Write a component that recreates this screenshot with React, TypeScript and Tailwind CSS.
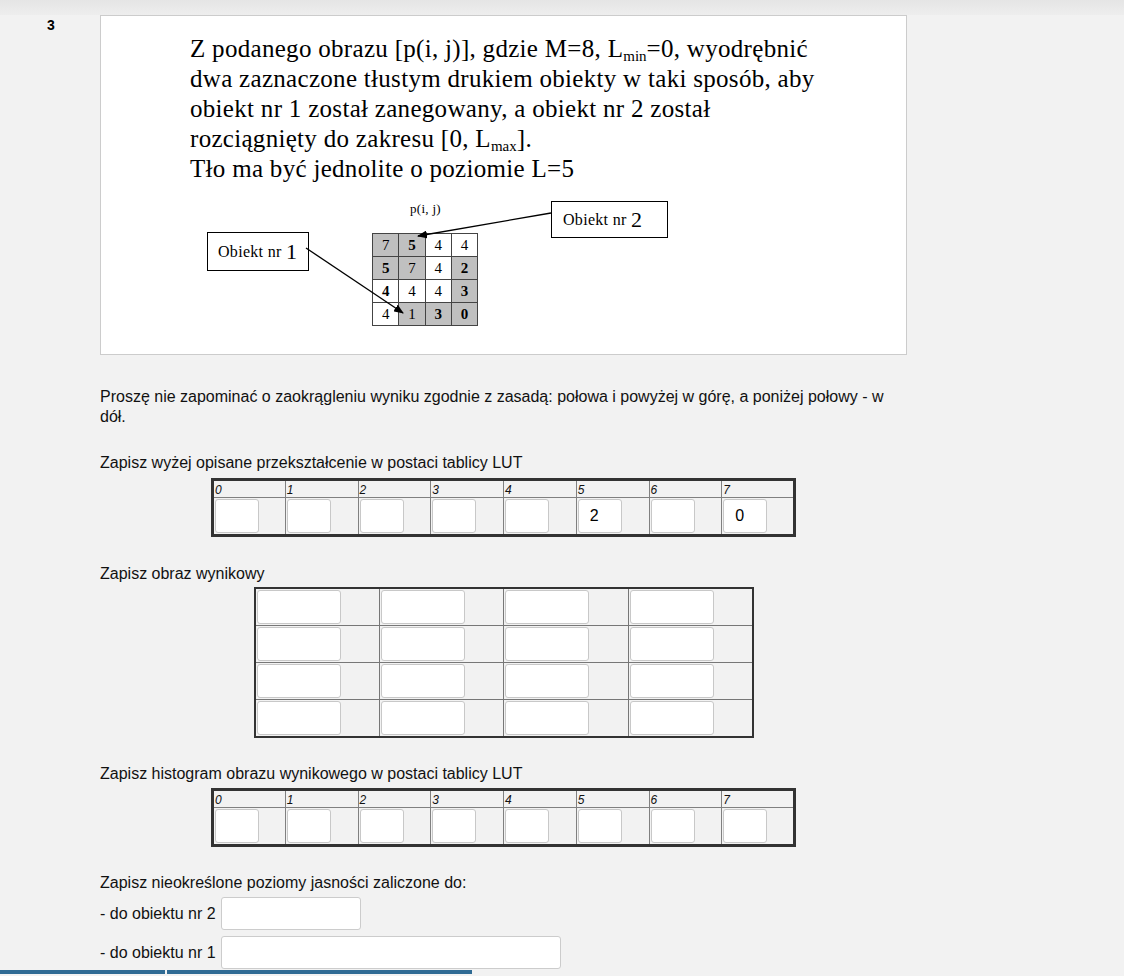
import React from 'react';

type Cell = { v: string; gray: boolean; bold: boolean };

const pixels: Cell[][] = [
  [{ v: '7', gray: true, bold: false }, { v: '5', gray: true, bold: true }, { v: '4', gray: false, bold: false }, { v: '4', gray: false, bold: false }],
  [{ v: '5', gray: true, bold: true }, { v: '7', gray: true, bold: false }, { v: '4', gray: false, bold: false }, { v: '2', gray: true, bold: true }],
  [{ v: '4', gray: false, bold: true }, { v: '4', gray: false, bold: false }, { v: '4', gray: false, bold: false }, { v: '3', gray: true, bold: true }],
  [{ v: '4', gray: false, bold: false }, { v: '1', gray: true, bold: false }, { v: '3', gray: true, bold: true }, { v: '0', gray: true, bold: true }],
];

function Diagram() {
  return (
    <div className="relative ml-[99px] mt-[12px] h-[140px] w-[480px] font-['Liberation_Serif',serif] text-black">
      <div className="absolute left-[210px] top-[5px] text-[13px] leading-[15px] tracking-[0.3px]">p(i, j)</div>

      <div className="absolute left-[7px] top-[36px] flex h-[39px] w-[102px] items-center border border-black pl-[10px] text-[16px] tracking-[0.3px]">
        Obiekt nr&nbsp;<span className="text-[22px] leading-none">1</span>
      </div>
      <div className="absolute left-[351px] top-[5px] flex h-[37px] w-[117px] items-center border border-black pl-[11px] text-[16px] tracking-[0.3px]">
        Obiekt nr&nbsp;<span className="text-[22px] leading-none">2</span>
      </div>

      <table className="absolute left-[172px] top-[37px] w-[106px] table-fixed border-collapse border border-black">
        <tbody>
          {pixels.map((row, r) => (
            <tr key={r}>
              {row.map((c, i) => (
                <td
                  key={i}
                  className={`h-[23px] border border-[#444] p-0 text-center text-[15px] leading-[15px] ${c.gray ? 'bg-[#c0c0c0]' : 'bg-white'} ${c.bold ? 'font-bold' : ''}`}
                >
                  {c.v}
                </td>
              ))}
            </tr>
          ))}
        </tbody>
      </table>

      <svg className="pointer-events-none absolute left-0 top-0" width="480" height="140" viewBox="0 0 480 140">
        <defs>
          <marker id="head" markerWidth="10" markerHeight="8" refX="9" refY="4" orient="auto" markerUnits="userSpaceOnUse">
            <path d="M0,0 L10,4 L0,8 Z" fill="#000" />
          </marker>
        </defs>
        <line x1="106" y1="52" x2="203" y2="117" stroke="#000" strokeWidth="1.3" markerEnd="url(#head)" />
        <line x1="351" y1="17" x2="218" y2="40" stroke="#000" strokeWidth="1.3" markerEnd="url(#head)" />
      </svg>
    </div>
  );
}

function LutTable({ values }: { values: Record<number, string> }) {
  const cols = [0, 1, 2, 3, 4, 5, 6, 7];
  return (
    <table className="mx-auto w-[585px] table-fixed border-collapse border-[3px] border-[#333]">
      <tbody>
        <tr>
          {cols.map((i) => (
            <td key={i} className="h-[18px] border border-[#808080] p-0 pl-px align-bottom text-[12px] italic leading-[13px]">
              {i}
            </td>
          ))}
        </tr>
        <tr>
          {cols.map((i) => (
            <td key={i} className="h-[38px] border border-[#808080] p-px">
              <input
                className="block h-[34px] w-[44px] rounded-[3px] border border-[#c8c8c8] bg-white px-[11px] text-[16px] text-black outline-none"
                defaultValue={values[i] ?? ''}
              />
            </td>
          ))}
        </tr>
      </tbody>
    </table>
  );
}

function ImageTable() {
  const rows = [0, 1, 2, 3];
  return (
    <table className="mx-auto w-[500px] table-fixed border-collapse border-2 border-[#333]">
      <tbody>
        {rows.map((r) => (
          <tr key={r}>
            {rows.map((c) => (
              <td key={c} className="h-[37px] border border-[#777] p-px">
                <input className="block h-[34px] w-[84px] rounded-[3px] border border-[#c8c8c8] bg-white outline-none" />
              </td>
            ))}
          </tr>
        ))}
      </tbody>
    </table>
  );
}

export default function App() {
  return (
    <div className="min-h-screen bg-[#f2f2f2] font-['Liberation_Sans',Arial,sans-serif] text-[#111]">
      <div className="h-[15px] bg-gradient-to-b from-[#e5e5e5] to-[#eeeeee]" />
      <div className="flex">
        <div className="w-[100px] shrink-0 pl-[47px] pt-[2px] text-[14px] font-bold leading-[16px] text-black">3</div>

        <div className="w-[807px] shrink-0">
          <div className="border border-[#cccccc] bg-white pb-[18px] pt-[18px]">
            <div className="pl-[89px] font-['Liberation_Serif',serif] text-[25px] leading-[30px] tracking-[0.3px] text-black">
              <div>
                Z podanego obrazu [p(i, j)], gdzie M=8, L<sub className="text-[15px] tracking-normal">min</sub>=0, wyodrębnić
              </div>
              <div>dwa zaznaczone tłustym drukiem obiekty w taki sposób, aby</div>
              <div>obiekt nr 1 został zanegowany, a obiekt nr 2 został</div>
              <div>
                rozciągnięty do zakresu [0, L<sub className="text-[15px] tracking-normal">max</sub>].
              </div>
              <div>Tło ma być jednolite o poziomie L=5</div>
            </div>
            <Diagram />
          </div>

          <p className="mt-[32px] text-[16px] leading-[20px]">
            Proszę nie zapominać o zaokrągleniu wyniku zgodnie z zasadą: połowa i powyżej w górę, a poniżej połowy - w dół.
          </p>

          <p className="mt-[26px] text-[16px] leading-[20px]">Zapisz wyżej opisane przekształcenie w postaci tablicy LUT</p>
          <div className="mt-[5px]">
            <LutTable values={{ 5: '2', 7: '0' }} />
          </div>

          <p className="mt-[27px] text-[16px] leading-[20px]">Zapisz obraz wynikowy</p>
          <div className="mt-[3px]">
            <ImageTable />
          </div>

          <p className="mt-[26px] text-[16px] leading-[20px]">Zapisz histogram obrazu wynikowego w postaci tablicy LUT</p>
          <div className="mt-[4px]">
            <LutTable values={{}} />
          </div>

          <p className="mt-[26px] text-[16px] leading-[20px]">Zapisz nieokreślone poziomy jasności zaliczone do:</p>
          <div className="mt-[4px] flex items-center gap-[5px] text-[16px]">
            <span>- do obiektu nr 2</span>
            <input className="h-[33px] w-[140px] rounded-[3px] border border-[#cccccc] bg-white outline-none" />
          </div>
          <div className="mt-[6px] flex items-center gap-[5px] text-[16px]">
            <span>- do obiektu nr 1</span>
            <input className="h-[33px] w-[340px] rounded-[3px] border border-[#cccccc] bg-white outline-none" />
          </div>
        </div>
      </div>
      <div className="mt-[1px] flex gap-[2px]">
        <div className="h-[4px] w-[165px] bg-[#2f6b94]" />
        <div className="h-[4px] w-[305px] bg-[#2f6b94]" />
      </div>
    </div>
  );
}
